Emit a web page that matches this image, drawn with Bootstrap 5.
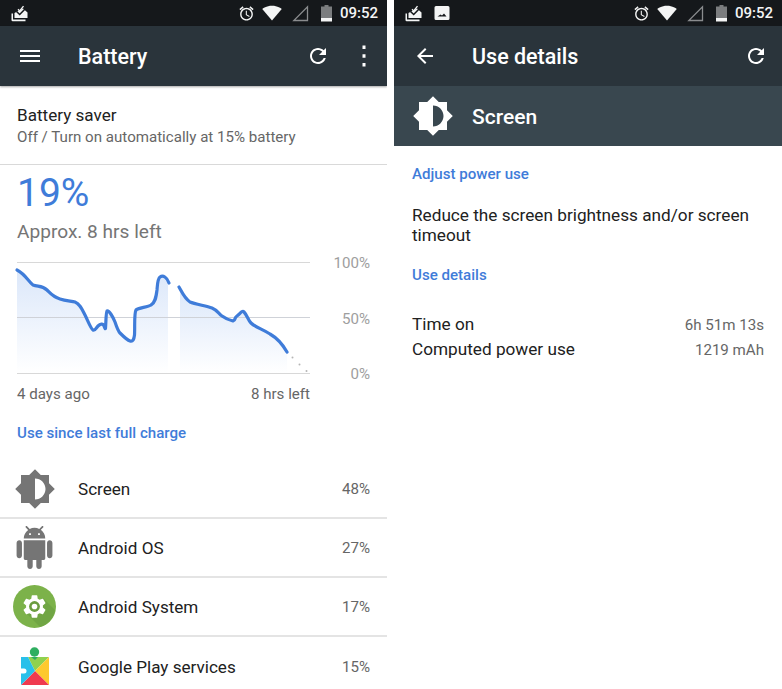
<!DOCTYPE html>
<html lang="en">
<head>
<meta charset="utf-8">
<link rel="stylesheet" href="https://cdn.jsdelivr.net/npm/bootstrap@5.3.0/dist/css/bootstrap.min.css">
<style>
html,body{height:689px;overflow:hidden;background:#fff;font-family:Roboto,"Liberation Sans",sans-serif;}
.shell{height:689px;gap:7px;}
.pane-l{width:387px;flex:none;overflow:hidden;}
.pane-r{width:388px;flex:none;overflow:hidden;}
.sbar{height:26px;background:#15181b;color:#f4f5f5;font-size:15px;font-weight:500;padding-left:11px;padding-right:9px;}
.sbar svg{display:block;flex:none;}
.sbar-time{margin-left:8px;padding-top:1px;}
.gap-a{margin-left:7px;}
.gap-b{margin-left:10px;}
.gap-c{margin-left:12px;}
.tbar{height:60px;background:#2a343b;color:#fff;position:relative;}
.tbar-shadow{box-shadow:0 1px 2px rgba(0,0,0,.35);}
.tbar-title{font-size:21.5px;font-weight:500;padding-top:2px;}
.tbar svg{display:block;flex:none;}
.hdr{height:60px;background:#39474f;color:#fff;}
.hdr-title{font-size:21px;font-weight:500;padding-top:3px;}
.saver{height:79px;padding:19px 17px 0;border-bottom:1px solid #d9d9d9;}
.saver-t{font-size:17.1px;line-height:20px;color:#212121;}
.saver-s{font-size:15.1px;line-height:25px;color:#666;}
.pct{font-size:39px;line-height:46px;color:#3f7cd9;padding:5px 0 0 17px;font-weight:400;}
.approx{font-size:19.1px;line-height:24px;color:#757575;padding:4px 0 0 17px;}
.chart{display:block;margin-top:11px;}
.lnk{font-size:15.1px;font-weight:500;color:#3f7cd9;line-height:20px;}
.rows{margin-top:17px;}
.urow{height:59px;border-bottom:2px solid #e4e4e4;}
.urow:last-child{border-bottom:0;}
.uico{width:69px;flex:none;display:flex;align-items:center;justify-content:center;margin-right:9px;}
.uname{font-size:17.1px;color:#212121;flex:1;padding-top:2px;}
.upct{font-size:15.1px;color:#666;padding-right:17px;padding-top:2px;}
.det{padding:18px 18px 0 18px;}
.det-text{font-size:17.2px;line-height:20px;color:#212121;margin:21px 0 20px;}
.kv{font-size:17.2px;line-height:24px;color:#212121;}
.kv-v{font-size:15.1px;color:#666;}
.kvs{margin-top:27px;}
</style>
</head>
<body>
<div class="d-flex shell">
  <div class="pane-l">
    <div class="sbar d-flex align-items-center">
      <svg width="17" height="17" viewBox="0 0 17 17" class="me-auto"><path fill="#f4f5f5" d="M.5 8.500h1.500v6H14.500v1.700H1.700A1.200 1.200 0 0 1 .5 15z"/><path fill="#f4f5f5" d="M3.500 8 8 5.500 12 3.500 16.500 7.500V13H3.500z"/><path fill="none" stroke="#15181b" stroke-width="1.600" d="M5.500 6.500l3.200 3L15 3"/><path fill="none" stroke="#f4f5f5" stroke-width="1.300" d="M7 4.300l1.700 1.700L12.500 1.200"/></svg>
      <svg width="17" height="17" viewBox="0 0 24 24"><path fill="#f4f5f5" d="M22 5.720l-4.600-3.860-1.290 1.530 4.600 3.860L22 5.720zM7.880 3.390L6.600 1.860 2 5.710l1.290 1.530 4.590-3.850zM12.500 8H11v6l4.750 2.850.75-1.230-4-2.370V8zM12 4c-4.970 0-9 4.030-9 9s4.020 9 9 9c4.970 0 9-4.030 9-9s-4.030-9-9-9zm0 16c-3.870 0-7-3.130-7-7s3.130-7 7-7 7 3.130 7 7-3.130 7-7 7z"/></svg>
      <svg width="20" height="17" viewBox="0 0 24 20" class="gap-a"><path fill="#f4f5f5" d="M12 18.500 23.700 4.500C23.200 4.100 18.700.7 12 .7S.8 4.100.3 4.500z"/></svg>
      <svg width="17" height="17" viewBox="0 0 17 17" class="gap-b"><path fill="none" stroke="#8a8c8e" stroke-width="1.300" d="M15.500 1.800V15.500H1.800z"/></svg>
      <svg width="11" height="17" viewBox="0 0 11 17" class="gap-c"><path fill="#7b7d7f" d="M3.500 0h4v1.500H11V13H0V1.500h3.500z"/><path fill="#f4f5f5" d="M0 13h11v3.500H0z"/></svg>
      <div class="sbar-time">09:52</div>
    </div>
    <div class="tbar tbar-shadow d-flex align-items-center">
      <svg width="24" height="24" viewBox="0 0 24 24" style="margin-left:18px"><path fill="#fff" d="M2 6h20v2H2zM2 11h20v2H2zM2 16h20v2H2z"/></svg>
      <div class="tbar-title" style="margin-left:36px">Battery</div>
      <svg width="24" height="24" viewBox="0 0 24 24" class="ms-auto"><path fill="#fff" d="M17.650 6.350C16.200 4.900 14.210 4 12 4c-4.420 0-7.990 3.580-7.990 8s3.570 8 7.990 8c3.730 0 6.840-2.550 7.730-6h-2.080c-.82 2.330-3.040 4-5.650 4-3.310 0-6-2.690-6-6s2.690-6 6-6c1.660 0 3.140.69 4.220 1.780L13 11h7V4l-2.350 2.350z"/></svg>
      <svg width="24" height="24" viewBox="0 0 24 24" style="margin-left:22px;margin-right:11px"><path fill="#fff" d="M10.500 1.500h3v3.500h-3zM10.500 10.300h3v3.500h-3zM10.500 19h3v3.500h-3z"/></svg>
    </div>
    <div class="saver">
      <div class="saver-t">Battery saver</div>
      <div class="saver-s">Off / Turn on automatically at 15% battery</div>
    </div>
    <div class="pct">19%</div>
    <div class="approx">Approx. 8 hrs left</div>
    <svg class="chart" width="387" height="159" viewBox="0 255 387 159">
      <defs><linearGradient id="gf" x1="0" y1="0" x2="0" y2="1"><stop offset="0" stop-color="#dbe7fa"/><stop offset="1" stop-color="#ffffff"/></linearGradient></defs>
      <path fill="url(#gf)" d="M17 270L25 275L33 285L42 286L47 290L53 296L60 299L75 302L80 306L85 315L93 330L96 331L98 326L101 324L104 325L105 329L107 311L113 318L117 327L120 333L126 338L130 341L134 337L135 310L137 309L150 305L155 300L157 290L158 280L164 276L168 280V373H17z"/>
      <path fill="url(#gf)" d="M180 287L184 296L190 302L200 305L212 308L220 315L228 320L233 321L236 316L243 311L249 321L256 327L270 334L280 343L287 352V373H180z"/>
      <path stroke="#d8d8d8" stroke-width="1" d="M17 262.500H310M17 373.500H310"/>
      <path stroke="#cfd2d8" stroke-width="1" d="M17 317.500H310"/>
      <path fill="none" stroke="#3f7cd9" stroke-width="3.200" stroke-linecap="round" stroke-linejoin="round" d="M17 270C25 274 29 282 33 285C38 287 42 285 47 290C51 294 53 297 60 299C66 301 72 301 75 302C80 304 82 309 85 315C88 321 91 329 93 330C95 331 96 328 98 326C100 324 103 323 104 326C105 329 105.500 329 105.500 328C106 322 106 312 107 311C109 310 113 317 115 322C117 328 118 331 120 333C122 335 127 340 130 341C133 342 134 339 134.500 335C135 327 134 313 136 310C138 308 148 307 151 305C155 303 156 298 157 290C157.500 284 157.500 279 160 277C163 275 167 277 169 283"/>
      <path fill="none" stroke="#3f7cd9" stroke-width="3.200" stroke-linecap="round" stroke-linejoin="round" d="M179 287C182 292 184 298 190 302C195 304 206 306 212 308C217 310 219 314 222 316C226 319 229 320 233 321C236 320 234 318 237 316C240 314 242 310 244 312C247 315 248 320 251 323C255 327 262 329 270 334C277 338 283 345 287 352"/>
      <g fill="#b5b5b5"><circle cx="292.500" cy="357.500" r="1"/><circle cx="299.500" cy="364.500" r="1"/><circle cx="306.500" cy="371" r="1"/></g>
      <g font-size="15.100" fill="#9e9e9e" text-anchor="end" font-family="Roboto,sans-serif"><text x="370" y="268">100%</text><text x="370" y="324">50%</text><text x="370" y="379">0%</text></g>
      <g font-size="15.100" fill="#666" font-family="Roboto,sans-serif"><text x="17" y="399">4 days ago</text><text x="310" y="399" text-anchor="end">8 hrs left</text></g>
    </svg>
    <div class="lnk" style="padding:9px 0 0 17px">Use since last full charge</div>
    <div class="rows">
      <div class="urow d-flex align-items-center">
        <div class="uico"><svg width="42" height="42" viewBox="0 0 24 24"><path fill="#757575" fill-rule="evenodd" d="M20 15.310L23.310 12 20 8.690V4h-4.690L12 .69 8.690 4H4v4.690L.69 12 4 15.310V20h4.690L12 23.310 15.310 20H20v-4.690zM12 18V6c3.310 0 6 2.690 6 6s-2.690 6-6 6z"/></svg></div>
        <div class="uname">Screen</div><div class="upct">48%</div>
      </div>
      <div class="urow d-flex align-items-center">
        <div class="uico"><svg width="43" height="43" viewBox="0 0 24 24"><path fill="#757575" d="M6 18c0 .55.45 1 1 1h1v3.500c0 .83.67 1.500 1.500 1.500s1.500-.67 1.500-1.500V19h2v3.500c0 .83.67 1.500 1.500 1.500s1.500-.67 1.500-1.500V19h1c.55 0 1-.45 1-1V8H6v10zM3.500 8C2.670 8 2 8.670 2 9.500v7c0 .83.67 1.500 1.500 1.500S5 17.330 5 16.500v-7C5 8.670 4.330 8 3.500 8zm17 0c-.83 0-1.500.67-1.500 1.500v7c0 .83.67 1.500 1.500 1.500s1.500-.67 1.500-1.500v-7c0-.83-.67-1.500-1.500-1.500zm-4.970-5.840l1.300-1.300c.2-.2.2-.51 0-.71-.2-.2-.51-.2-.71 0l-1.480 1.480C13.850 1.230 12.950 1 12 1c-.96 0-1.860.23-2.660.63L7.850.15c-.2-.2-.51-.2-.71 0-.2.2-.2.51 0 .71l1.310 1.310C6.970 3.260 6 5.010 6 7h12c0-1.990-.97-3.750-2.470-4.840zM10 5H9V4h1v1zm5 0h-1V4h1v1z"/></svg></div>
        <div class="uname">Android OS</div><div class="upct">27%</div>
      </div>
      <div class="urow d-flex align-items-center">
        <div class="uico"><svg width="43" height="43" viewBox="0 0 43 43"><circle cx="21.500" cy="21.500" r="21.500" fill="#7cb24a"/><path fill="#70a544" d="M14 29 30 13 42 25A21.500 21.500 0 0 1 27 42z"/><g transform="translate(8 8) scale(1.125)"><path fill="#fff" d="M19.430 12.980c.04-.32.07-.64.07-.98s-.03-.66-.07-.98l2.110-1.650c.19-.15.24-.42.12-.64l-2-3.460c-.12-.22-.39-.3-.61-.22l-2.490 1c-.52-.4-1.080-.73-1.690-.98l-.38-2.650C14.460 2.180 14.250 2 14 2h-4c-.25 0-.46.18-.49.42l-.38 2.650c-.61.25-1.170.59-1.690.98l-2.490-1c-.23-.09-.49 0-.61.22l-2 3.460c-.13.22-.07.49.12.64l2.110 1.650c-.04.32-.07.65-.07.98s.03.66.07.98l-2.110 1.650c-.19.15-.24.42-.12.64l2 3.460c.12.22.39.3.61.22l2.490-1c.52.4 1.080.73 1.690.98l.38 2.650c.03.24.24.42.49.42h4c.25 0 .46-.18.49-.42l.38-2.650c.61-.25 1.170-.59 1.690-.98l2.490 1c.23.09.49 0 .61-.22l2-3.460c.12-.22.07-.49-.12-.64l-2.110-1.650z"/><circle cx="12" cy="12" r="4.800" fill="#6a9c3f"/><circle cx="12" cy="12" r="2.500" fill="#fff"/></g></svg></div>
        <div class="uname">Android System</div><div class="upct">17%</div>
      </div>
      <div class="urow d-flex align-items-center">
        <div class="uico"><svg width="30" height="39" viewBox="0 0 30 39"><circle cx="14.500" cy="5" r="4.700" fill="#2fae60"/><path fill="#8fd14f" d="M8 10H29L15 24z"/><path fill="#2fae60" d="M11 10H18L15 13z"/><path fill="#fdc92f" d="M29 10V38L15 24z"/><path fill="#ef3a4f" d="M1 38 15 24 29 38z"/><path fill="#29c0ea" d="M1 10H8L15 24 1 38z"/><path fill="#fff" d="M0 21.500h4a2.500 2.500 0 0 1 0 5H0z"/></svg></div>
        <div class="uname">Google Play services</div><div class="upct">15%</div>
      </div>
    </div>
  </div>
  <div class="pane-r">
    <div class="sbar d-flex align-items-center">
      <svg width="17" height="17" viewBox="0 0 17 17"><path fill="#f4f5f5" d="M.5 8.500h1.500v6H14.500v1.700H1.700A1.200 1.200 0 0 1 .5 15z"/><path fill="#f4f5f5" d="M3.500 8 8 5.500 12 3.500 16.500 7.500V13H3.500z"/><path fill="none" stroke="#15181b" stroke-width="1.600" d="M5.500 6.500l3.200 3L15 3"/><path fill="none" stroke="#f4f5f5" stroke-width="1.300" d="M7 4.300l1.700 1.700L12.500 1.200"/></svg>
      <svg width="16" height="16" viewBox="0 0 16 16" class="me-auto" style="margin-left:12px"><path fill="#f4f5f5" fill-rule="evenodd" d="M2 1h12a1.500 1.500 0 0 1 1.500 1.500v11A1.500 1.500 0 0 1 14 15H2a1.500 1.500 0 0 1-1.500-1.500v-11A1.500 1.500 0 0 1 2 1zM3.500 11.500h9L10 8.500 8 10.500 6.500 9.500z"/></svg>
      <svg width="17" height="17" viewBox="0 0 24 24"><path fill="#f4f5f5" d="M22 5.720l-4.600-3.860-1.290 1.530 4.600 3.860L22 5.720zM7.880 3.390L6.600 1.860 2 5.710l1.290 1.530 4.590-3.850zM12.500 8H11v6l4.750 2.850.75-1.230-4-2.370V8zM12 4c-4.970 0-9 4.030-9 9s4.020 9 9 9c4.970 0 9-4.030 9-9s-4.030-9-9-9zm0 16c-3.870 0-7-3.130-7-7s3.130-7 7-7 7 3.130 7 7-3.130 7-7 7z"/></svg>
      <svg width="20" height="17" viewBox="0 0 24 20" class="gap-a"><path fill="#f4f5f5" d="M12 18.500 23.700 4.500C23.200 4.100 18.700.7 12 .7S.8 4.100.3 4.500z"/></svg>
      <svg width="17" height="17" viewBox="0 0 17 17" class="gap-b"><path fill="none" stroke="#8a8c8e" stroke-width="1.300" d="M15.500 1.800V15.500H1.800z"/></svg>
      <svg width="11" height="17" viewBox="0 0 11 17" class="gap-c"><path fill="#7b7d7f" d="M3.500 0h4v1.500H11V13H0V1.500h3.500z"/><path fill="#f4f5f5" d="M0 13h11v3.500H0z"/></svg>
      <div class="sbar-time">09:52</div>
    </div>
    <div class="tbar d-flex align-items-center">
      <svg width="24" height="24" viewBox="0 0 24 24" style="margin-left:19px"><path fill="#fff" d="M20 11H7.830l5.590-5.590L12 4l-8 8 8 8 1.410-1.410L7.830 13H20v-2z"/></svg>
      <div class="tbar-title" style="margin-left:35px">Use details</div>
      <svg width="24" height="24" viewBox="0 0 24 24" class="ms-auto" style="margin-right:14px"><path fill="#fff" d="M17.650 6.350C16.200 4.900 14.210 4 12 4c-4.420 0-7.990 3.580-7.990 8s3.570 8 7.990 8c3.730 0 6.840-2.550 7.730-6h-2.080c-.82 2.330-3.040 4-5.650 4-3.310 0-6-2.690-6-6s2.690-6 6-6c1.660 0 3.140.69 4.220 1.780L13 11h7V4l-2.350 2.350z"/></svg>
    </div>
    <div class="hdr d-flex align-items-center">
      <svg width="42" height="42" viewBox="0 0 24 24" style="margin-left:18px"><path fill="#fff" fill-rule="evenodd" d="M20 15.310L23.310 12 20 8.690V4h-4.690L12 .69 8.690 4H4v4.690L.69 12 4 15.310V20h4.690L12 23.310 15.310 20H20v-4.690zM12 18V6c3.310 0 6 2.690 6 6s-2.690 6-6 6z"/></svg>
      <div class="hdr-title" style="margin-left:18px">Screen</div>
    </div>
    <div class="det">
      <div class="lnk">Adjust power use</div>
      <div class="det-text">Reduce the screen brightness and/or screen timeout</div>
      <div class="lnk">Use details</div>
      <div class="kvs">
        <div class="kv d-flex justify-content-between align-items-baseline"><span>Time on</span><span class="kv-v">6h 51m 13s</span></div>
        <div class="kv d-flex justify-content-between align-items-baseline"><span>Computed power use</span><span class="kv-v">1219 mAh</span></div>
      </div>
    </div>
  </div>
</div>
</body>
</html>
